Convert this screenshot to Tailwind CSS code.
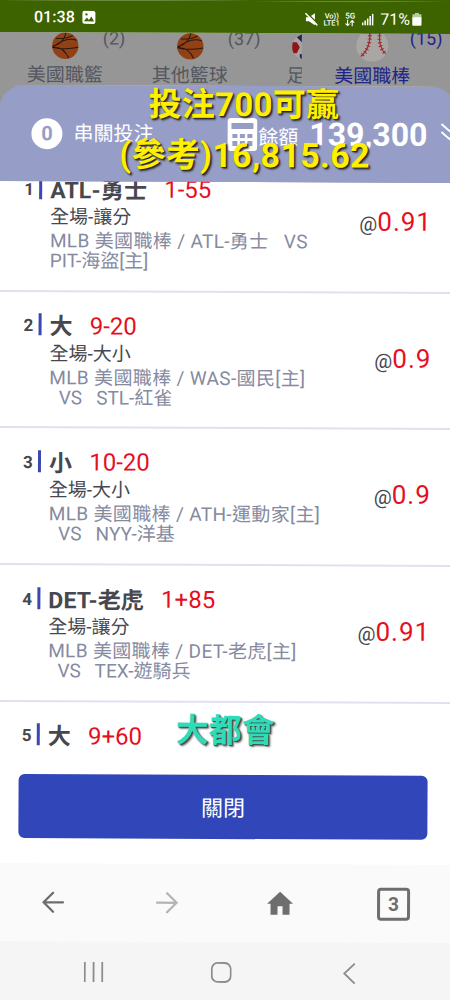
<!DOCTYPE html>
<html lang="zh-Hant">
<head>
  <meta charset="UTF-8" />
  <meta name="viewport" content="width=device-width, initial-scale=1.0"/>
  <title>串關投注</title>
  <script src="https://cdn.jsdelivr.net/npm/@tailwindcss/browser@4"></script>
</head>
<body class="bg-[#3d6200] w-[450px] h-[1000px] overflow-hidden font-['Roboto','Noto_Sans_CJK_TC',sans-serif]">
  <div class="relative w-[456px] h-[1000px] flex flex-col bg-white origin-top-left rotate-[0.25deg]">

    <!-- status bar -->
    <div class="relative z-10 h-8 shrink-0 bg-[#3d6200] text-white flex items-center pl-[34px] pr-[34px]">
      <span class="text-[16px] font-medium tracking-[0.1px] leading-none mt-[2px]">01:38</span>
      <svg class="ml-[7px] mt-[1px] w-[14px] h-[14px]" viewBox="0 0 14 14"><rect x="0.5" y="0.5" width="13" height="13" rx="2" fill="#fff"/><path d="M2 11l3-4 2 2.5L9.500 6l2.700 5z" fill="#3d6200"/><circle cx="4.500" cy="4" r="1.200" fill="#3d6200"/></svg>
      <div class="ml-auto flex items-center mt-[3px]">
        <svg class="w-[13px] h-[14px]" viewBox="0 0 13 14"><path d="M1 5h3l6-4v12L4 9H1z" fill="#fff"/><path d="M1.500 0l12 12" stroke="#3d6200" stroke-width="1.500"/><path d="M0.500 1l12 12" stroke="#fff" stroke-width="1.500"/></svg>
        <div class="ml-[5px] w-[17px] text-[7.500px] leading-[7px] font-medium text-center">Vo))<br>LTE1</div>
        <div class="ml-[4px] w-[12px] flex flex-col items-center">
          <span class="text-[8px] leading-[7px] font-medium">5G</span>
          <svg class="w-[10px] h-[7px]" viewBox="0 0 10 7"><path d="M2.700 0v6M0.700 4l2 2 2-2M7.300 7V1M5.300 3l2-2 2 2" stroke="#fff" stroke-width="1.100" fill="none"/></svg>
        </div>
        <svg class="ml-[6px] w-[12px] h-[12px]" viewBox="0 0 12 12" fill="#fff"><rect x="0" y="9" width="1.500" height="3"/><rect x="2.500" y="7" width="1.500" height="5"/><rect x="5" y="5" width="1.500" height="7"/><rect x="7.500" y="2.500" width="1.500" height="9.500"/><rect x="10" y="0" width="1.500" height="12"/></svg>
        <span class="ml-[6px] text-[16px] leading-none">71%</span>
        <svg class="ml-[2px] w-[10px] h-[13px]" viewBox="0 0 10 13"><path d="M3 0h4v1.500h2.500V13h-9V1.500H3z" fill="#fff" opacity=".65"/><path d="M0.500 4.500h9V12a1 1 0 0 1-1 1h-7a1 1 0 0 1-1-1z" fill="#fff"/></svg>
      </div>
    </div>

    <!-- sport tabs, dimmed behind the sheet -->
    <div class="h-[53px] shrink-0 bg-[#969696] flex text-[19px] text-[#54565f]">
      <div class="flex w-[302px] shrink-0 overflow-hidden">
        <div class="relative w-[130px] shrink-0 flex flex-col items-center">
          <svg class="w-[27px] h-[27px] shrink-0" viewBox="0 0 27 27"><use href="#basketball"/></svg>
          <span class="leading-[28px] mt-[2px]">美國職籃</span>
          <span class="absolute left-[103px] -top-[5px] text-[18px] leading-[22px]">(2)</span>
        </div>
        <div class="relative w-[120px] shrink-0 flex flex-col items-center">
          <svg class="w-[27px] h-[27px] shrink-0" viewBox="0 0 27 27"><use href="#basketball"/></svg>
          <span class="leading-[28px] mt-[2px]">其他籃球</span>
          <span class="absolute left-[98px] -top-[5px] text-[18px] leading-[22px]">(37)</span>
        </div>
        <div class="w-[111px] shrink-0 flex flex-col items-center">
          <svg class="w-[27px] h-[27px] shrink-0" viewBox="0 0 27 27"><circle cx="13.500" cy="13.500" r="13" fill="#a5a5a8"/><path d="M5 4l5-3 4 1v6l-4 1zM8 21l6-1v7c-3 0-4-1-6-3z" fill="#24244a"/><path d="M1 9l4 0 3 5-3 6-3 0C0 17 0 13 1 9z" fill="#8f1518"/></svg>
          <span class="leading-[28px] mt-[2px]">足球</span>
        </div>
      </div>
      <div class="relative w-[141px] shrink-0 flex flex-col items-center text-[#20228c]">
        <svg class="w-[33px] h-[31px] -mt-[2px] shrink-0" viewBox="0 0 33 31"><circle cx="16.500" cy="14" r="16" fill="#aaa6a3"/><path d="M14 0Q15 17 5 25M24 0Q22 16 30 22" stroke="#9c2a32" stroke-width="1.200" fill="none"/><path d="M14 0Q15 17 5 25M24 0Q22 16 30 22" stroke="#9c2a32" stroke-width="4" stroke-dasharray="1 2.500" fill="none"/></svg>
        <span class="leading-[28px]">美國職棒</span>
        <span class="absolute left-[108px] -top-[6px] text-[18px] leading-[22px]">(15)</span>
      </div>
    </div>

    <!-- betting sheet header -->
    <div class="relative h-[96px] shrink-0 bg-[#969696]">
      <div class="h-full rounded-t-[24px] bg-[#969ec8] text-white flex items-center pl-[32px] overflow-hidden">
        <span class="shrink-0 w-[31px] h-[31px] rounded-full bg-white text-[#969ec8] text-[20px] font-bold flex items-center justify-center">0</span>
        <span class="ml-[11px] text-[20px] w-[80px] shrink-0 whitespace-nowrap">串關投注</span>
        <svg class="ml-[74px] w-[30px] h-[33px] shrink-0" viewBox="0 0 30 33"><rect width="30" height="33" rx="4" fill="#fff"/><path d="M4 5h22v6H4zM5 16h5v4H5zM12.500 16h5v4h-5zM20 16h5v4h-5zM5 23h5v5H5zM12.500 23h5v5h-5zM20 23h5v5h-5z" fill="#969ec8"/></svg>
        <span class="ml-[1px] mt-[5px] text-[20px] leading-none shrink-0">餘額</span>
        <span class="ml-[11px] text-[32px] font-bold leading-none shrink-0">139,300</span>
        <svg class="ml-[12px] -mt-[7px] w-[20px] h-[20px] shrink-0" viewBox="0 0 20 20" fill="none" stroke="#fff" stroke-width="2"><path d="M2 2l8 7 8-7M2 10l8 7 8-7"/></svg>
      </div>
    </div>

    <!-- picks, scrolled a little -->
    <div class="h-[578px] shrink-0 overflow-hidden text-[#46474f]">
      <div id="picks" class="-mt-[26px]"></div>
    </div>

    <!-- close -->
    <div class="h-[104px] shrink-0 pl-[22px] pt-[15px]">
      <button class="block w-[409px] h-[64px] rounded-[6px] bg-[#3146b8] text-white text-[22px] pt-[3px]">關閉</button>
    </div>

    <!-- browser bar -->
    <div class="h-[78px] shrink-0 bg-[#fafafa] flex items-center pl-[46px] text-[#6e6e6e]">
      <svg class="w-[22px] h-[22px]" viewBox="0 0 22 22" fill="none" stroke="currentColor" stroke-width="2.300" stroke-linecap="round"><path d="M21 11H1.500M11 1.500L1.500 11l9.500 9.500"/></svg>
      <svg class="ml-[92px] w-[22px] h-[22px] text-[#b4b4b4]" viewBox="0 0 22 22" fill="none" stroke="currentColor" stroke-width="2.300" stroke-linecap="round"><path d="M1 11h19.500M11 1.500l9.500 9.500-9.500 9.500"/></svg>
      <svg class="ml-[89px] w-[26px] h-[24px]" viewBox="0 0 26 24" fill="currentColor"><path d="M13 0.500L0 12.500h3.500V23.500h7V15h5v8.500h7V12.500H26z"/></svg>
      <span class="ml-[84px] w-[33px] h-[33px] border-[3.500px] border-[#6e6e6e] rounded-[4px] flex items-center justify-center text-[19px] font-bold leading-none">3</span>
    </div>

    <!-- system navigation -->
    <div class="h-[59px] shrink-0 bg-[#f5f5f5] flex items-center pl-[88px] pt-[2px] text-[#8c8c8c]">
      <svg class="w-[20px] h-[21px]" viewBox="0 0 20 21" stroke="currentColor" stroke-width="1.800"><path d="M1 0.500v20M9.800 0.500v20M18.500 0.500v20"/></svg>
      <svg class="ml-[107px] w-[21px] h-[21px]" viewBox="0 0 21 21"><rect x="1" y="1" width="19" height="19" rx="6" fill="none" stroke="currentColor" stroke-width="1.800"/></svg>
      <svg class="ml-[111px] w-[13px] h-[22px]" viewBox="0 0 13 22" fill="none" stroke="currentColor" stroke-width="1.800"><path d="M12 1L1.500 11 12 21"/></svg>
    </div>

    <!-- captions over the page -->
    <div class="absolute z-20 left-[149px] top-[84px] text-[33px] leading-[40px] font-bold tracking-[0.3px] text-[#fff000] whitespace-nowrap [text-shadow:1px_1px_1px_#222,2px_2px_2px_#444]">投注700可贏</div>
    <div class="absolute z-20 left-[120px] top-[134px] text-[34px] leading-[40px] font-bold tracking-[0.3px] text-[#fff000] whitespace-nowrap [text-shadow:1px_1px_1px_#222,2px_2px_2px_#444]">(參考)16,815.62</div>
    <div class="absolute z-20 left-[179px] top-[710px] text-[33px] leading-[40px] font-bold text-[#2edcba] whitespace-nowrap [text-shadow:1px_1px_1px_#444,2px_2px_2px_#777]">大都會</div>
  </div>

  <svg class="hidden">
    <symbol id="basketball" viewBox="0 0 27 27">
      <circle cx="13.500" cy="13.500" r="13.200" fill="#914116"/>
      <path d="M4 6Q14 7 21 3M0.500 15Q13 18 26.500 15M1 14Q12 11 14 0.500M1 15Q14 4 25 8M1 15Q12 14 17 26" stroke="#2b1710" stroke-width="1" fill="none"/>
    </symbol>
  </svg>

  <script>
    const picks = [
      { team: 'ATL-勇士', line: '1-55', type: '全場-讓分', match: ['MLB 美國職棒 / ATL-勇士   VS', 'PIT-海盜[主]'], odds: '0.91' },
      { team: '大', line: '9-20', type: '全場-大小', match: ['MLB 美國職棒 / WAS-國民[主]', '  VS   STL-紅雀'], odds: '0.9' },
      { team: '小', line: '10-20', type: '全場-大小', match: ['MLB 美國職棒 / ATH-運動家[主]', '  VS   NYY-洋基'], odds: '0.9' },
      { team: 'DET-老虎', line: '1+85', type: '全場-讓分', match: ['MLB 美國職棒 / DET-老虎[主]', '  VS   TEX-遊騎兵'], odds: '0.91' },
      { team: '大', line: '9+60', type: '', match: [], odds: '' }
    ];

    document.getElementById('picks').innerHTML = picks.map((p, i) => `
      <div class="relative h-[136.700px] border-b-[2.500px] border-[#e0e1ef] pt-[20px] pl-[25px] pr-[23px]">
        <div class="flex items-center h-[28px]">
          <span class="w-[11px] text-[17px] font-bold leading-none">${i + 1}</span>
          <span class="ml-[4px] w-[2.500px] h-[22px] bg-[#3a48b0] -mt-[3px]"></span>
          <span class="ml-[8.500px] mt-[2px] text-[23px] font-bold leading-none tracking-[0.2px]">${p.team}</span>
          <span class="ml-[17px] text-[24px] leading-none text-[#e60f1e]">${p.line}</span>
        </div>
        <div class="pl-[26px] pt-px text-[19px] leading-[26px] whitespace-pre">${p.type}</div>
        <div class="pl-[26px] text-[19px] leading-[20px] text-[#858a9f] whitespace-pre mt-px"><span class="tracking-[0.35px]">${p.match[0] || ''}</span>\n${p.match[1] || ''}</div>
        ${p.odds ? `<div class="absolute right-[23px] top-[48px] leading-[34px]"><span class="text-[20px]">@</span><span class="text-[26px] tracking-[1px] text-[#e60f1e]">${p.odds}</span></div>` : ''}
      </div>`).join('');
  </script>
</body>
</html>
